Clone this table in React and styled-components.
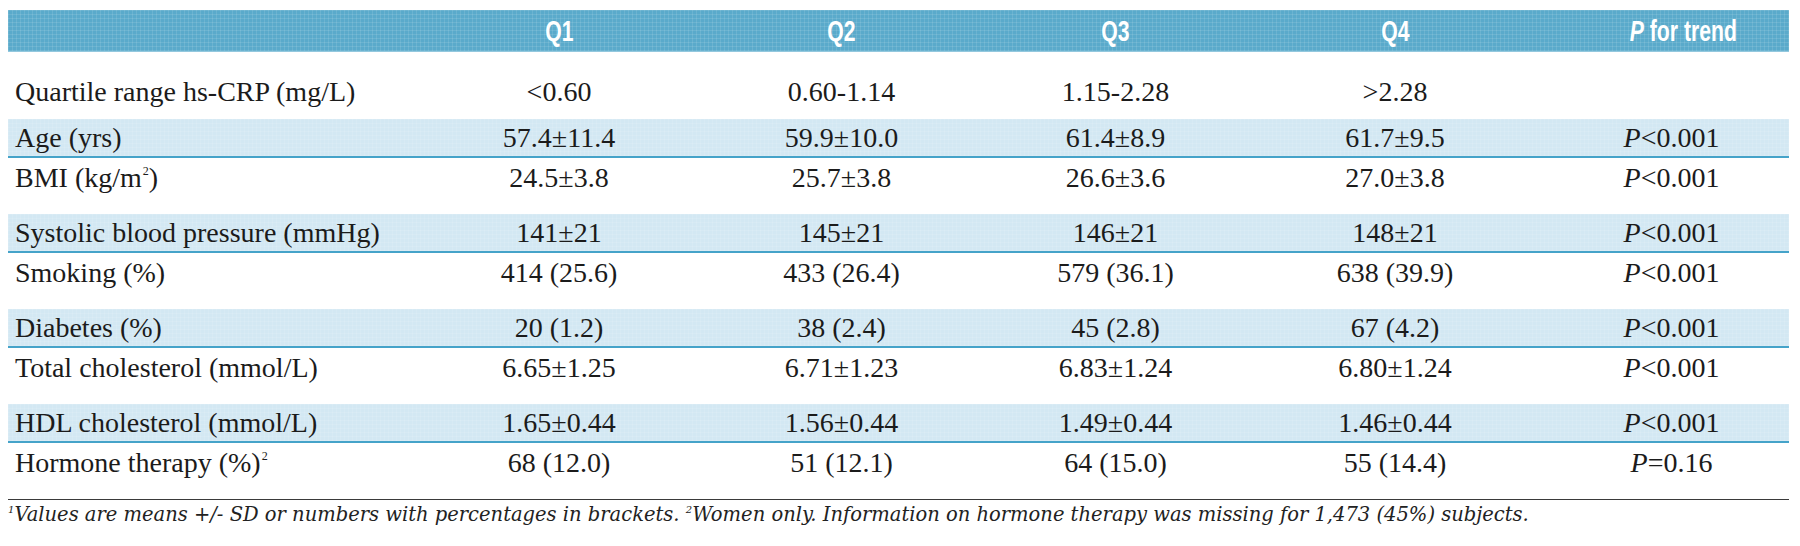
import React from "react";
import styled, { createGlobalStyle } from "styled-components";

const GlobalStyle = createGlobalStyle`
  html, body { margin: 0; padding: 0; background: #ffffff; }
  body { font-family: "Liberation Serif", "Times New Roman", serif; color: #1b1b1b; }
`;

const COLS = "406px 290px 275px 273px 286px 1fr";

const texture = `
  background-image:
    linear-gradient(rgba(255, 255, 255, 0.10) 1px, transparent 1px),
    linear-gradient(90deg, rgba(255, 255, 255, 0.10) 1px, transparent 1px);
  background-size: 4px 4px;
`;

const Page = styled.div`
  width: 1800px;
  padding: 10px 11px 0 8px;
  box-sizing: border-box;
`;

const Table = styled.div`
  display: flex;
  flex-direction: column;
`;

const HeaderRow = styled.div`
  display: grid;
  grid-template-columns: ${COLS};
  height: 42px;
  align-items: center;
  background-color: #5aaacb;
  ${texture}
  border-bottom: 1px solid #93c8de;
  box-sizing: border-box;
`;

const HeadCell = styled.div`
  text-align: center;
  padding-left: ${(p) => p.$shift || 0}px;
`;

const HeadText = styled.span`
  display: inline-block;
  font-family: "Liberation Sans", Arial, sans-serif;
  font-weight: 700;
  font-size: 29px;
  line-height: 30px;
  color: #ffffff;
  transform: scaleX(0.73);
  white-space: nowrap;
`;

const Row = styled.div`
  display: grid;
  grid-template-columns: ${COLS};
  align-items: start;
  padding-top: ${(p) => p.$top || 0}px;
  padding-bottom: ${(p) => (p.$shaded ? 0 : p.$bottom ?? 17)}px;
  background-color: ${(p) => (p.$shaded ? "#d3e8f3" : "#ffffff")};
  ${(p) => (p.$shaded ? texture : "")}
  border-bottom: ${(p) => (p.$shaded ? "2px solid #45a3c9" : "none")};
  box-sizing: border-box;
`;

const Cell = styled.div`
  font-size: 28px;
  line-height: ${(p) => (p.$shaded ? 37 : 39)}px;
  white-space: nowrap;
  text-align: ${(p) => (p.$label ? "left" : "center")};
  padding-left: ${(p) => (p.$label ? 7 : p.$shift || 0)}px;
`;

const Sup = styled.span`
  font-size: 12px;
  line-height: 0;
  position: relative;
  top: -12px;
  margin-left: 1px;
`;

const Footnote = styled.div`
  border-top: 1.5px solid #3a3a3a;
  padding-top: 2px;
  font-family: "DejaVu Serif", "Liberation Serif", serif;
  font-style: italic;
  font-size: 19.5px;
  line-height: 26px;
  color: #222;
  white-space: nowrap;
`;

const FSup = styled.span`
  font-size: 10px;
  line-height: 0;
  position: relative;
  top: -8px;
`;

const PVal = ({ op, v }) => (
  <>
    <i>P</i>
    {op}
    {v}
  </>
);

const rows = [
  { label: "Age (yrs)", vals: ["57.4±11.4", "59.9±10.0", "61.4±8.9", "61.7±9.5"], p: ["<", "0.001"] },
  { label: <>BMI (kg/m<Sup>2</Sup>)</>, vals: ["24.5±3.8", "25.7±3.8", "26.6±3.6", "27.0±3.8"], p: ["<", "0.001"] },
  { label: "Systolic blood pressure (mmHg)", vals: ["141±21", "145±21", "146±21", "148±21"], p: ["<", "0.001"] },
  { label: "Smoking (%)", vals: ["414 (25.6)", "433 (26.4)", "579 (36.1)", "638 (39.9)"], p: ["<", "0.001"] },
  { label: "Diabetes (%)", vals: ["20 (1.2)", "38 (2.4)", "45 (2.8)", "67 (4.2)"], p: ["<", "0.001"] },
  { label: "Total cholesterol (mmol/L)", vals: ["6.65±1.25", "6.71±1.23", "6.83±1.24", "6.80±1.24"], p: ["<", "0.001"] },
  { label: "HDL cholesterol (mmol/L)", vals: ["1.65±0.44", "1.56±0.44", "1.49±0.44", "1.46±0.44"], p: ["<", "0.001"] },
  { label: <>Hormone therapy (%)<Sup>2</Sup></>, vals: ["68 (12.0)", "51 (12.1)", "64 (15.0)", "55 (14.4)"], p: ["=", "0.16"] },
];

export default function App() {
  return (
    <>
      <GlobalStyle />
      <Page>
        <Table>
          <HeaderRow>
            <HeadCell />
            <HeadCell><HeadText>Q1</HeadText></HeadCell>
            <HeadCell><HeadText>Q2</HeadText></HeadCell>
            <HeadCell><HeadText>Q3</HeadText></HeadCell>
            <HeadCell><HeadText>Q4</HeadText></HeadCell>
            <HeadCell $shift={40}>
              <HeadText><i>P</i> for trend</HeadText>
            </HeadCell>
          </HeaderRow>
          <Row $top={20} $bottom={8}>
            <Cell $label>Quartile range hs-CRP (mg/L)</Cell>
            <Cell>&lt;0.60</Cell>
            <Cell>0.60-1.14</Cell>
            <Cell>1.15-2.28</Cell>
            <Cell>&gt;2.28</Cell>
            <Cell />
          </Row>
          {rows.map((r, i) => {
            const shaded = i % 2 === 0;
            return (
              <Row key={i} $shaded={shaded}>
                <Cell $label $shaded={shaded}>{r.label}</Cell>
                {r.vals.map((v, j) => (
                  <Cell key={j} $shaded={shaded}>{v}</Cell>
                ))}
                <Cell $shaded={shaded} $shift={16}>
                  <PVal op={r.p[0]} v={r.p[1]} />
                </Cell>
              </Row>
            );
          })}
        </Table>
        <Footnote>
          <FSup>1</FSup>Values are means +/- SD or numbers with percentages in brackets. <FSup>2</FSup>Women only. Information on hormone therapy was missing for 1,473 (45%) subjects.
        </Footnote>
      </Page>
    </>
  );
}
